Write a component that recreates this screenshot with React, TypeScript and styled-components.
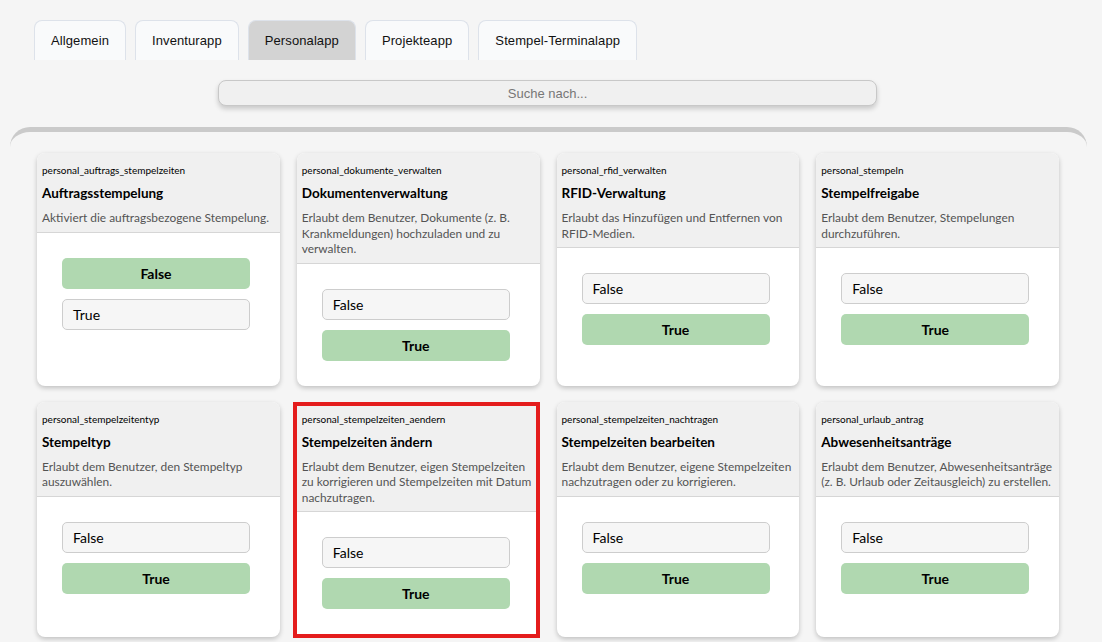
import React, { useState } from 'react';
import styled, { createGlobalStyle, css } from 'styled-components';

const GlobalStyle = createGlobalStyle`
  html, body {
    margin: 0;
    padding: 0;
    background: #f5f5f5;
  }
  body {
    font-family: 'Liberation Sans', Arial, sans-serif;
    color: #111;
  }
`;

type Permission = {
  key: string;
  title: string;
  description: string;
  value: boolean;
  highlighted?: boolean;
};

const permissions: Permission[] = [
  {
    key: 'personal_auftrags_stempelzeiten',
    title: 'Auftragsstempelung',
    description: 'Aktiviert die auftragsbezogene Stempelung.',
    value: false,
  },
  {
    key: 'personal_dokumente_verwalten',
    title: 'Dokumentenverwaltung',
    description: 'Erlaubt dem Benutzer, Dokumente (z. B. Krankmeldungen) hochzuladen und zu verwalten.',
    value: true,
  },
  {
    key: 'personal_rfid_verwalten',
    title: 'RFID-Verwaltung',
    description: 'Erlaubt das Hinzufügen und Entfernen von RFID-Medien.',
    value: true,
  },
  {
    key: 'personal_stempeln',
    title: 'Stempelfreigabe',
    description: 'Erlaubt dem Benutzer, Stempelungen durchzuführen.',
    value: true,
  },
  {
    key: 'personal_stempelzeitentyp',
    title: 'Stempeltyp',
    description: 'Erlaubt dem Benutzer, den Stempeltyp auszuwählen.',
    value: true,
  },
  {
    key: 'personal_stempelzeiten_aendern',
    title: 'Stempelzeiten ändern',
    description: 'Erlaubt dem Benutzer, eigen Stempelzeiten zu korrigieren und Stempelzeiten mit Datum nachzutragen.',
    value: true,
    highlighted: true,
  },
  {
    key: 'personal_stempelzeiten_nachtragen',
    title: 'Stempelzeiten bearbeiten',
    description: 'Erlaubt dem Benutzer, eigene Stempelzeiten nachzutragen oder zu korrigieren.',
    value: true,
  },
  {
    key: 'personal_urlaub_antrag',
    title: 'Abwesenheitsanträge',
    description: 'Erlaubt dem Benutzer, Abwesenheitsanträge (z. B. Urlaub oder Zeitausgleich) zu erstellen.',
    value: true,
  },
];

const tabs = ['Allgemein', 'Inventurapp', 'Personalapp', 'Projekteapp', 'Stempel-Terminalapp'];

const Page = styled.div`
  min-height: 642px;
  padding-top: 20px;
  box-sizing: border-box;
`;

const TabBar = styled.div`
  display: flex;
  gap: 9px;
  padding-left: 34px;
`;

const Tab = styled.button<{ active?: boolean }>`
  height: 40px;
  padding: 0 16px;
  border: 1px solid #dde2ea;
  border-bottom: none;
  border-radius: 8px 8px 0 0;
  background: ${props => (props.active ? '#d3d3d3' : '#f9fafb')};
  font-family: 'Liberation Sans', Arial, sans-serif;
  font-size: 13px;
  letter-spacing: 0.1px;
  color: #111;
  cursor: pointer;
`;

const SearchRow = styled.div`
  display: flex;
  padding: 20px 0 0 218px;
`;

const SearchInput = styled.input`
  width: 659px;
  height: 26px;
  box-sizing: border-box;
  border: 1px solid #c8c8c8;
  border-radius: 8px;
  background: #f0f0f0;
  box-shadow: 0 3px 5px rgba(0, 0, 0, 0.18);
  text-align: center;
  font-family: 'Liberation Sans', Arial, sans-serif;
  font-size: 13px;
  color: #333;
  outline: none;
  &::placeholder {
    color: #777;
  }
`;

const Panel = styled.div`
  margin: 21px 15px 0 10px;
  border-top: 5px solid #cacaca;
  border-radius: 20px 20px 0 0;
  padding: 21px 28px 8px 27px;
`;

const Grid = styled.div`
  display: grid;
  grid-template-columns: repeat(4, 1fr);
  column-gap: 17px;
  row-gap: 16px;
`;

const Card = styled.div<{ highlighted?: boolean }>`
  display: flex;
  flex-direction: column;
  background: #fff;
  border-radius: 8px;
  overflow: hidden;
  box-shadow: 0 2px 5px rgba(0, 0, 0, 0.22);
  font-family: Lato, 'Open Sans', sans-serif;
  ${props =>
    props.highlighted
      ? css`
          border: 4px solid #e41c1c;
          border-radius: 0;
          margin-left: -4px;
          margin-bottom: -1px;
          box-shadow: none;
        `
      : ``}
`;

const CardHeader = styled.div<{ highlighted?: boolean }>`
  background: #f0f0f0;
  border-bottom: 1px solid #d6d6d6;
  padding: ${props => (props.highlighted ? '6px 4px 6px 5px' : '10px 4px 6px 5px')};
`;

const CardKey = styled.div`
  font-size: 10px;
  line-height: 14px;
  color: #000;
`;

const CardTitle = styled.div`
  margin-top: 7px;
  font-size: 13.5px;
  font-weight: 700;
  line-height: 18px;
  color: #000;
`;

const CardDescription = styled.div`
  margin-top: 8px;
  font-size: 11.9px;
  line-height: 15.5px;
  color: #545454;
`;

const CardBody = styled.div`
  display: flex;
  flex-direction: column;
  gap: 10px;
  padding: 25px 0 25px 25px;
`;

const OptionButton = styled.button<{ selected?: boolean }>`
  width: 188px;
  height: 31px;
  box-sizing: border-box;
  border-radius: 5px;
  font-family: Lato, 'Open Sans', sans-serif;
  font-size: 14px;
  color: #000;
  cursor: pointer;
  ${props =>
    props.selected
      ? css`
          border: none;
          background: #b0d8b0;
          font-weight: 700;
          text-align: center;
        `
      : css`
          border: 1px solid #cdcdcd;
          background: #f6f6f6;
          text-align: left;
          padding: 0 10px;
        `}
`;

const PermissionCard: React.FC<{ permission: Permission }> = ({ permission }) => {
  const [value, setValue] = useState(permission.value);
  return (
    <Card highlighted={permission.highlighted}>
      <CardHeader highlighted={permission.highlighted}>
        <CardKey>{permission.key}</CardKey>
        <CardTitle>{permission.title}</CardTitle>
        <CardDescription>{permission.description}</CardDescription>
      </CardHeader>
      <CardBody>
        <OptionButton selected={!value} onClick={() => setValue(false)}>
          False
        </OptionButton>
        <OptionButton selected={value} onClick={() => setValue(true)}>
          True
        </OptionButton>
      </CardBody>
    </Card>
  );
};

export default function App() {
  const [activeTab, setActiveTab] = useState('Personalapp');
  return (
    <Page>
      <GlobalStyle />
      <TabBar>
        {tabs.map(tab => (
          <Tab key={tab} active={tab === activeTab} onClick={() => setActiveTab(tab)}>
            {tab}
          </Tab>
        ))}
      </TabBar>
      <SearchRow>
        <SearchInput placeholder="Suche nach..." />
      </SearchRow>
      <Panel>
        <Grid>
          {permissions.map(p => (
            <PermissionCard key={p.key} permission={p} />
          ))}
        </Grid>
      </Panel>
    </Page>
  );
}
